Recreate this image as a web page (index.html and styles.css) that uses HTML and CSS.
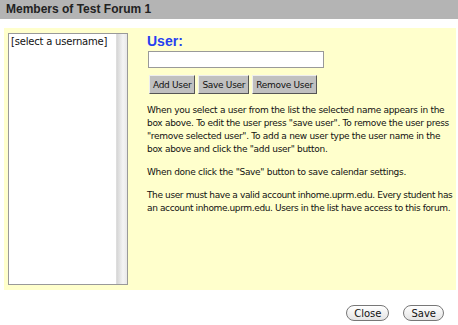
FILE: index.html
```html
<!DOCTYPE html>
<html lang="en">
<head>
    <meta charset="UTF-8">
    <title>Members of Test Forum 1</title>
    <link rel="stylesheet" href="styles.css">
</head>
<body>
    <div class="title-bar">Members of Test Forum 1</div>

    <div class="panel">
        <div class="user-list">
            <div class="list-items">
                <div class="list-item">[select a username]</div>
            </div>
            <div class="list-scroll"></div>
        </div>

        <div class="editor">
            <div class="user-label">User:</div>
            <input class="user-input" type="text">
            <div class="user-buttons">
                <button class="bevel-button">Add User</button>
                <button class="bevel-button">Save User</button>
                <button class="bevel-button">Remove User</button>
            </div>
            <p class="help">When you select a user from the list the selected name appears in the box above. To edit the user press "save user". To remove the user press "remove selected user". To add a new user type the user name in the box above and click the "add user" button.</p>
            <p class="help">When done click the "Save" button to save calendar settings.</p>
            <p class="help tight">The user must have a valid account inhome.uprm.edu. Every student has an account inhome.uprm.edu. Users in the list have access to this forum.</p>
        </div>
    </div>

    <div class="footer">
        <button class="pill-button">Close</button>
        <button class="pill-button">Save</button>
    </div>
</body>
</html>
```

FILE: styles.css
```css
body {
    margin: 0;
    font-family: "DejaVu Sans", Verdana, sans-serif;
    background-color: #fff;
    color: #111;
}

.title-bar {
    height: 19px;
    line-height: 19px;
    background-color: #b4b4b4;
    padding-left: 6px;
    font-family: "Liberation Sans", Arial, sans-serif;
    font-size: 12px;
    font-weight: bold;
    color: #222;
}

.panel {
    display: flex;
    margin: 9px 2px 0 4px;
    height: 252px;
    padding: 5px 0 5px 4px;
    background-color: #ffffcc;
}

.user-list {
    display: flex;
    width: 118px;
    height: 250px;
    border: 1px solid #999;
    background-color: #fff;
    flex-shrink: 0;
}

.list-items {
    flex: 1;
    padding: 2px 1px 2px 2px;
}

.list-item {
    font-size: 10px;
    letter-spacing: -0.2px;
    white-space: nowrap;
    color: #111;
}

.list-scroll {
    width: 10px;
    background: linear-gradient(to right, #d6d6d6, #f4f4f4 60%, #e8e8e8);
    border-left: 1px solid #ddd;
}

.editor {
    margin-left: 19px;
    flex: 1;
}

.user-label {
    font-family: "Liberation Sans", Arial, sans-serif;
    font-size: 14px;
    font-weight: bold;
    color: #2640f0;
    margin-top: 0;
    height: 16px;
}

.user-input {
    display: block;
    width: 170px;
    height: 13px;
    margin: 2px 0 0 1px;
    border: 1px solid #999;
    padding: 1px 2px;
    background-color: #fff;
}

.user-buttons {
    display: flex;
    gap: 3px;
    margin: 7px 0 0 2px;
}

.bevel-button {
    height: 19px;
    padding: 0 3px;
    background-color: #c0c0c0;
    border: 1px solid;
    border-color: #eee #555 #555 #eee;
    font-family: "DejaVu Sans", Verdana, sans-serif;
    font-size: 9px;
    color: #111;
    letter-spacing: -0.3px;
}

.help {
    font-size: 9px;
    line-height: 13px;
    margin: 10px 0 0 0;
    letter-spacing: -0.3px;
}

.help.tight {
    letter-spacing: -0.38px;
}

.footer {
    display: flex;
    justify-content: flex-end;
    gap: 14px;
    padding: 15px 14px 0 0;
}

.pill-button {
    height: 16px;
    padding: 0 7px;
    border: 1px solid #777;
    border-radius: 8px;
    background: linear-gradient(to bottom, #ffffff, #e4e4e4);
    font-family: "DejaVu Sans", Verdana, sans-serif;
    font-size: 10px;
    color: #111;
}
```
